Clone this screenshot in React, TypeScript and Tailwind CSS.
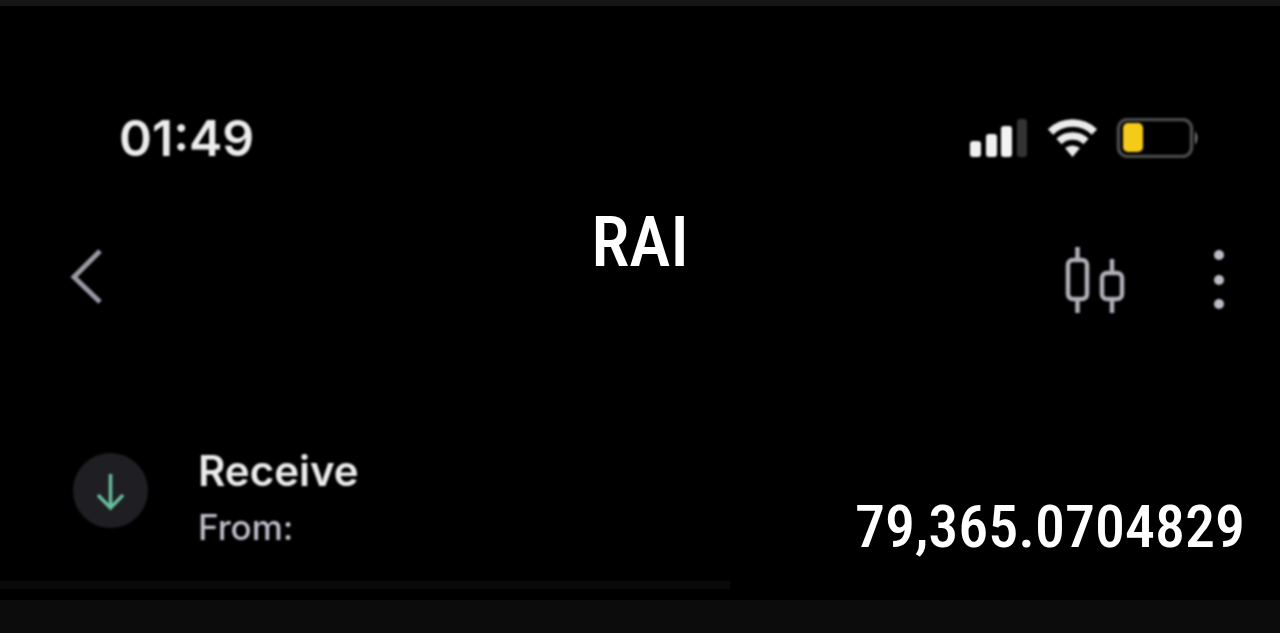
import React from "react";

function SignalIcon() {
  return (
    <svg className="h-10 w-15" viewBox="0 0 60 40" role="img" aria-label="Signal strength">
      <g fill="#f2f2f2">
        <rect x="2" y="23" width="11" height="16" rx="3" />
        <rect x="18" y="16" width="11" height="23" rx="3" />
        <rect x="33" y="8" width="11" height="31" rx="3" />
      </g>
      <rect x="49" y="1" width="10" height="38" rx="3" fill="#333333" />
    </svg>
  );
}

function WifiIcon() {
  return (
    <svg className="h-10 w-13" viewBox="0 0 52 40" role="img" aria-label="Wi-Fi">
      <g fill="none" stroke="#ececec" strokeWidth="7.500">
        <path d="M4.500 14a31.500 31.500 0 0 1 44 0" />
        <path d="M13 23.500a19.500 19.500 0 0 1 27 0" />
      </g>
      <path d="M19 30q7.500-5 15 0L26.500 39z" fill="#ececec" />
    </svg>
  );
}

function BatteryIcon() {
  return (
    <svg className="h-10 w-21" viewBox="0 0 84 40" role="img" aria-label="Battery low">
      <rect x="2.500" y="1.500" width="73" height="37" rx="9" fill="none" stroke="#4a4a4a" strokeWidth="3.500" />
      <rect x="7" y="5" width="20" height="29" rx="5" fill="#f5cb1b" />
      <path d="M79 13q5 7 0 14z" fill="#7a7a7a" />
    </svg>
  );
}

function CandlesIcon() {
  return (
    <svg className="h-17 w-16" viewBox="0 0 64 68" fill="none" stroke="#b0aeb6" strokeWidth="4.500" aria-hidden="true">
      <rect x="4" y="14" width="19" height="39" rx="5" />
      <path d="M13.500 1v13M13.500 53v14" />
      <rect x="38" y="27" width="20" height="26" rx="5" />
      <path d="M48 13v14M48 53v14" />
    </svg>
  );
}

export default function App() {
  return (
    <div className="min-h-screen border-t-6 border-[#151515] bg-[#0c0c0c] font-['Inter',sans-serif]">
      <main className="bg-black pb-[11px]">
        <div className="flex items-center justify-between pt-[110px] pr-20 pl-[119px] blur-[1px]">
          <time className="text-[50px] leading-[44px] font-semibold text-[#ececec]">01:49</time>
          <div className="flex items-center gap-[18px]">
            <SignalIcon />
            <WifiIcon />
            <BatteryIcon />
          </div>
        </div>

        <header className="grid grid-cols-3 items-start px-12 pt-10">
          <button type="button" aria-label="Back" className="mt-[46px] ml-[18px] justify-self-start blur-[1px]">
            <svg className="h-15 w-10" viewBox="0 0 40 60" fill="none" stroke="#9a98a3" strokeWidth="5" aria-hidden="true">
              <path d="M34 5L8 31L34 56" />
            </svg>
          </button>
          <h1 className="mt-[2px] justify-self-center font-['Roboto_Condensed',sans-serif] text-[70px] leading-20 font-medium text-white">
            RAI
          </h1>
          <div className="mt-[46px] flex items-start gap-20 justify-self-end blur-[1px]">
            <button type="button" aria-label="Chart">
              <CandlesIcon />
            </button>
            <button type="button" aria-label="More options">
              <svg className="h-17 w-6" viewBox="0 0 24 68" fill="#bebcc5" aria-hidden="true">
                <circle cx="11" cy="9" r="5" />
                <circle cx="11" cy="34" r="5" />
                <circle cx="11" cy="58" r="5" />
              </svg>
            </button>
          </div>
        </header>

        <section className="mt-[131px] flex items-start pr-[35px] pl-[73px]">
          <svg className="mt-2 h-[75px] w-[75px] blur-[1px]" viewBox="0 0 75 75" fill="none" aria-hidden="true">
            <circle cx="37.500" cy="37.500" r="37.500" fill="#1f1e22" />
            <path d="M37.500 21v34M25 42l12.500 13L50 42" stroke="#69bd9e" strokeWidth="3.500" />
          </svg>
          <div className="ml-[50px] flex-1 blur-[1px]">
            <h2 className="text-[42px] leading-13 font-semibold text-[#ececec]">Receive</h2>
            <p className="mt-[6px] text-[35px] leading-12 font-medium text-[#c0becb]">From:</p>
          </div>
          <p className="mt-[46px] font-['Roboto_Condensed',sans-serif] text-[60px] leading-18 font-medium text-white">
            79,365.0704829
          </p>
        </section>
        <div className="mt-[18px] h-2 w-[57%] bg-[#090909]" />
      </main>
    </div>
  );
}
